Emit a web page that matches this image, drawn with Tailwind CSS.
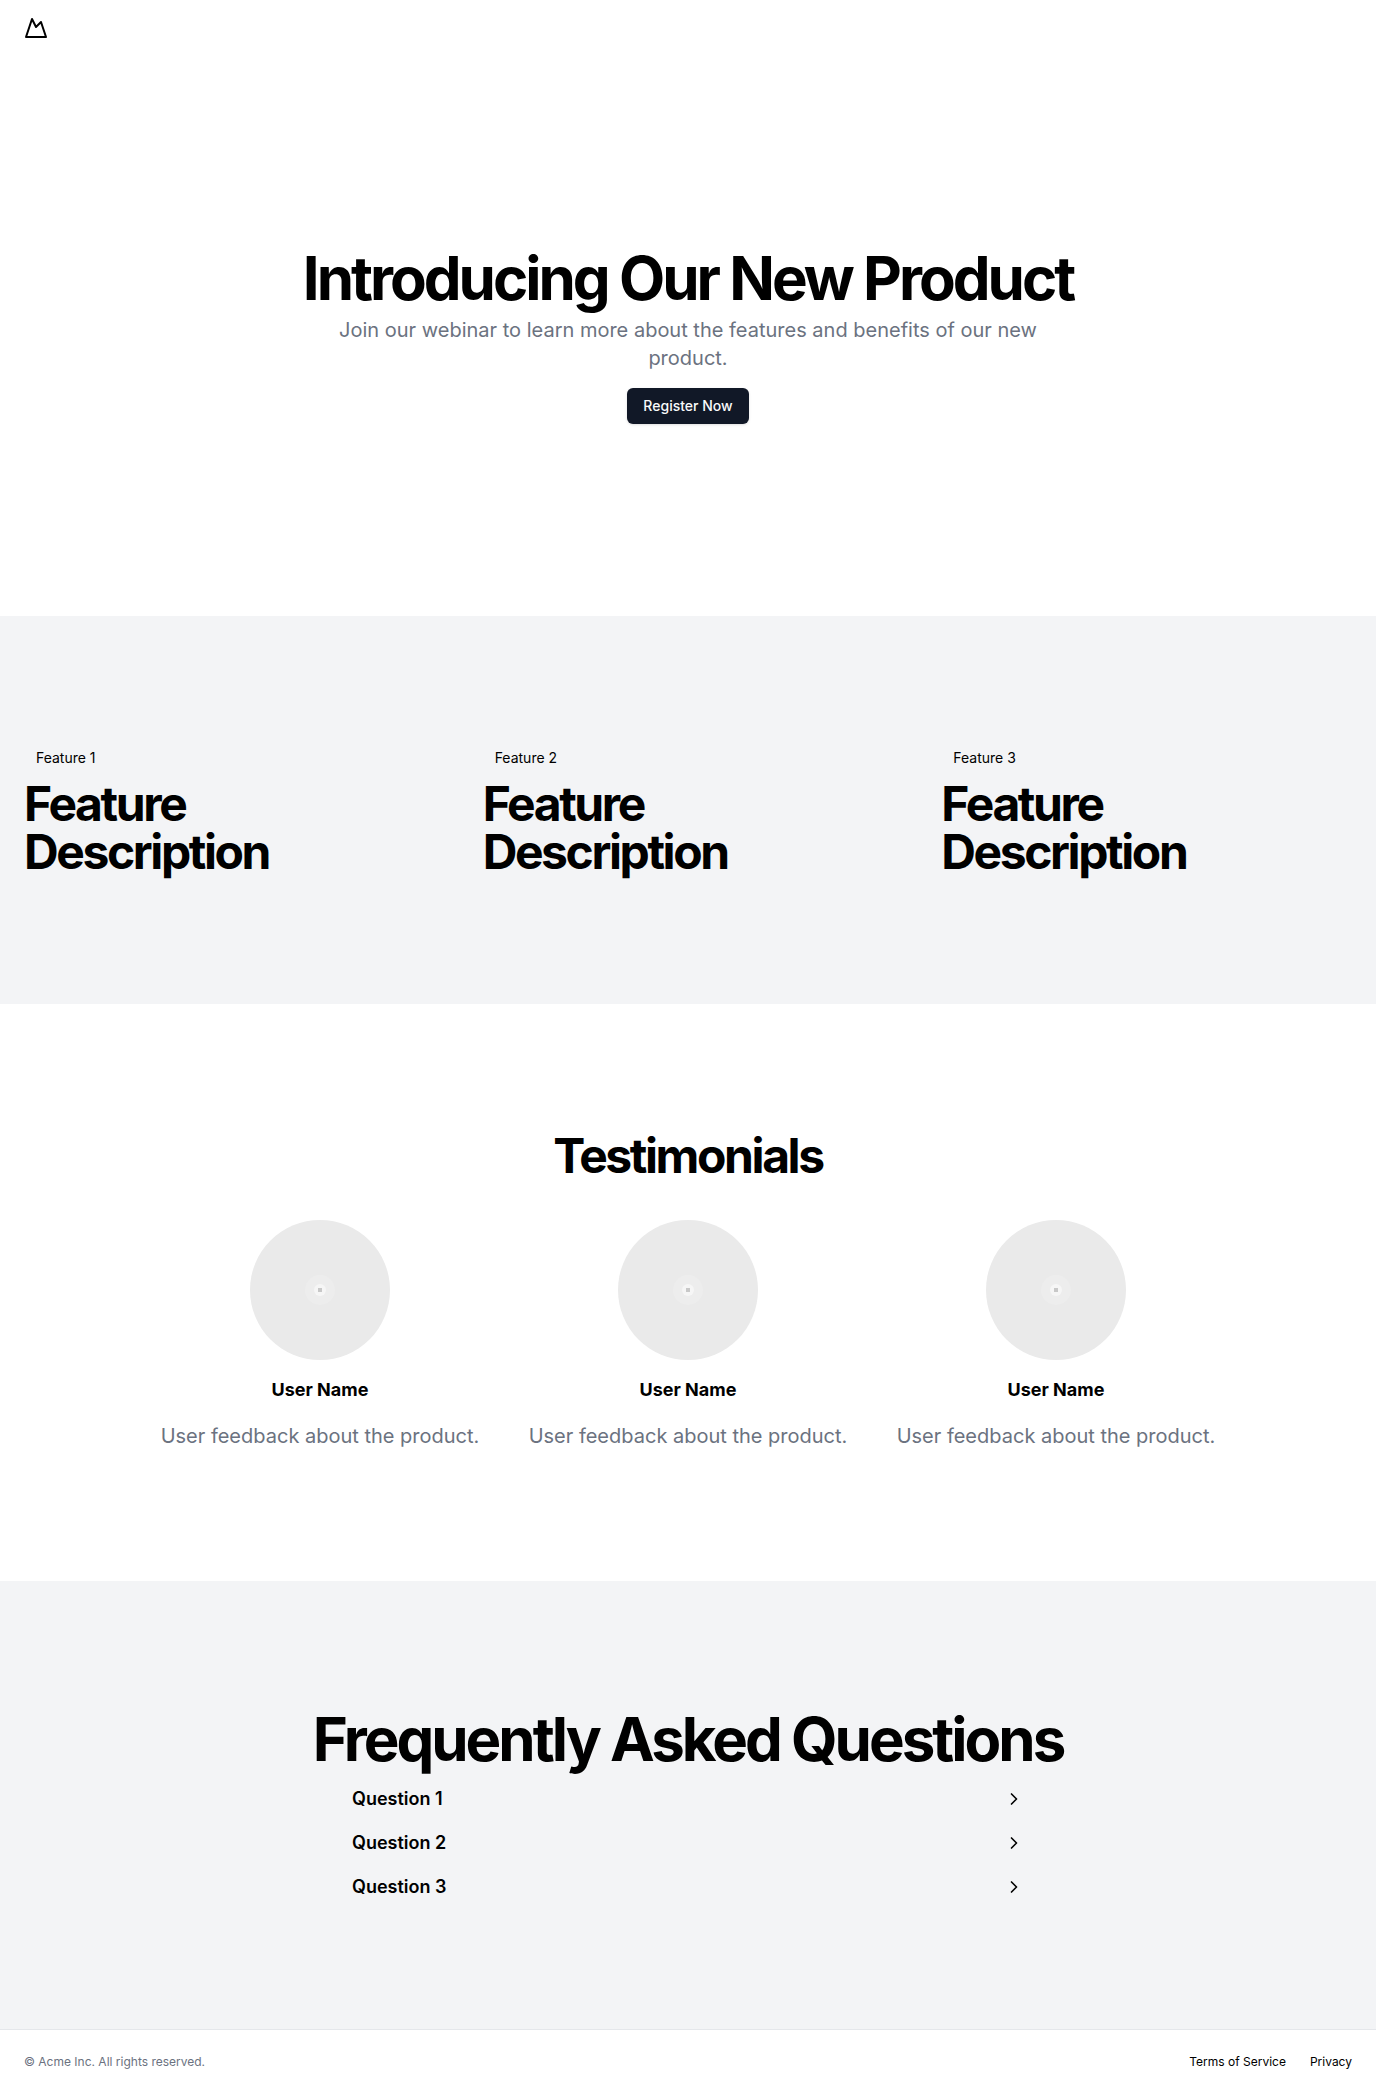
<!DOCTYPE html>
<html lang="en">
<head>
<meta charset="utf-8">
<meta name="viewport" content="width=device-width, initial-scale=1">
<title>Acme Inc</title>
<script src="https://cdn.jsdelivr.net/npm/@tailwindcss/browser@4"></script>
</head>
<body class="bg-white font-['Inter',sans-serif] text-black">
<!-- shared icon shapes -->
<svg class="hidden" aria-hidden="true">
  <symbol id="chevron" viewBox="0 0 24 24"><path d="m9 18 6-6-6-6" fill="none" stroke="currentColor" stroke-width="2" stroke-linecap="round" stroke-linejoin="round"/></symbol>
  <symbol id="avatar" viewBox="0 0 140 140">
    <circle cx="70" cy="70" r="70" fill="#eaeaea"/>
    <circle cx="70" cy="70" r="15" fill="#ededed"/>
    <circle cx="70" cy="70" r="6" fill="#f6f6f6"/>
    <rect x="68" y="68" width="4" height="4" fill="#c8c8c8"/>
  </symbol>
</svg>
<div class="flex min-h-screen flex-col">
  <header class="flex h-14 items-center px-6">
    <a href="#" aria-label="Acme Inc">
      <svg class="size-6" viewBox="0 0 24 24" fill="none" stroke="currentColor" stroke-width="2" stroke-linecap="round" stroke-linejoin="round"><path d="m8 3 4 8 5-5 5 15H2L8 3z"/></svg>
    </a>
  </header>
  <main class="flex-1">
    <section class="py-48">
      <div class="flex flex-col items-center gap-4 px-6 text-center">
        <div class="flex flex-col gap-2">
          <h1 class="text-6xl font-bold tracking-tighter">Introducing Our New Product</h1>
          <p class="mx-auto max-w-[700px] text-xl/7 text-[#6b7280]">Join our webinar to learn more about the features and benefits of our new product.</p>
        </div>
        <button type="button" class="h-9 rounded-md bg-[#111827] px-4 text-sm font-medium text-gray-50 shadow-sm">Register Now</button>
      </div>
    </section>
    <section class="bg-gray-100 py-32">
      <div class="grid grid-cols-3 gap-12 px-6">
        <div class="flex flex-col items-start gap-2">
          <div class="px-3 py-1 text-sm">Feature 1</div>
          <h2 class="text-5xl font-bold tracking-tighter">Feature Description</h2>
        </div>
        <div class="flex flex-col items-start gap-2">
          <div class="px-3 py-1 text-sm">Feature 2</div>
          <h2 class="text-5xl font-bold tracking-tighter">Feature Description</h2>
        </div>
        <div class="flex flex-col items-start gap-2">
          <div class="px-3 py-1 text-sm">Feature 3</div>
          <h2 class="text-5xl font-bold tracking-tighter">Feature Description</h2>
        </div>
      </div>
    </section>
    <section class="py-32">
      <div class="flex flex-col items-center gap-10 px-6 text-center">
        <h2 class="text-5xl font-bold tracking-tighter">Testimonials</h2>
        <div class="grid w-full max-w-[1056px] grid-cols-3 gap-12">
          <div class="flex flex-col items-center gap-4">
            <svg class="size-[140px]" role="img" aria-label="User avatar"><use href="#avatar"/></svg>
            <h3 class="text-lg/7 font-bold">User Name</h3>
            <p class="text-xl/[33px] text-[#6b7280]">User feedback about the product.</p>
          </div>
          <div class="flex flex-col items-center gap-4">
            <svg class="size-[140px]" role="img" aria-label="User avatar"><use href="#avatar"/></svg>
            <h3 class="text-lg/7 font-bold">User Name</h3>
            <p class="text-xl/[33px] text-[#6b7280]">User feedback about the product.</p>
          </div>
          <div class="flex flex-col items-center gap-4">
            <svg class="size-[140px]" role="img" aria-label="User avatar"><use href="#avatar"/></svg>
            <h3 class="text-lg/7 font-bold">User Name</h3>
            <p class="text-xl/[33px] text-[#6b7280]">User feedback about the product.</p>
          </div>
        </div>
      </div>
    </section>
    <section class="bg-gray-100 py-32">
      <div class="flex flex-col items-center gap-4 px-6">
        <h2 class="text-center text-6xl font-bold tracking-tighter">Frequently Asked Questions</h2>
        <div class="flex w-full max-w-2xl flex-col gap-4">
          <button type="button" aria-expanded="false" class="flex items-center justify-between text-lg/7 font-semibold">Question 1<svg class="size-5"><use href="#chevron"/></svg></button>
          <button type="button" aria-expanded="false" class="flex items-center justify-between text-lg/7 font-semibold">Question 2<svg class="size-5"><use href="#chevron"/></svg></button>
          <button type="button" aria-expanded="false" class="flex items-center justify-between text-lg/7 font-semibold">Question 3<svg class="size-5"><use href="#chevron"/></svg></button>
        </div>
      </div>
    </section>
  </main>
  <footer class="flex items-center justify-between border-t border-gray-200 px-6 py-6 text-xs">
    <p class="text-[#6b7280]">© Acme Inc. All rights reserved.</p>
    <nav class="flex gap-6">
      <a href="#">Terms of Service</a>
      <a href="#">Privacy</a>
    </nav>
  </footer>
</div>
</body>
</html>
